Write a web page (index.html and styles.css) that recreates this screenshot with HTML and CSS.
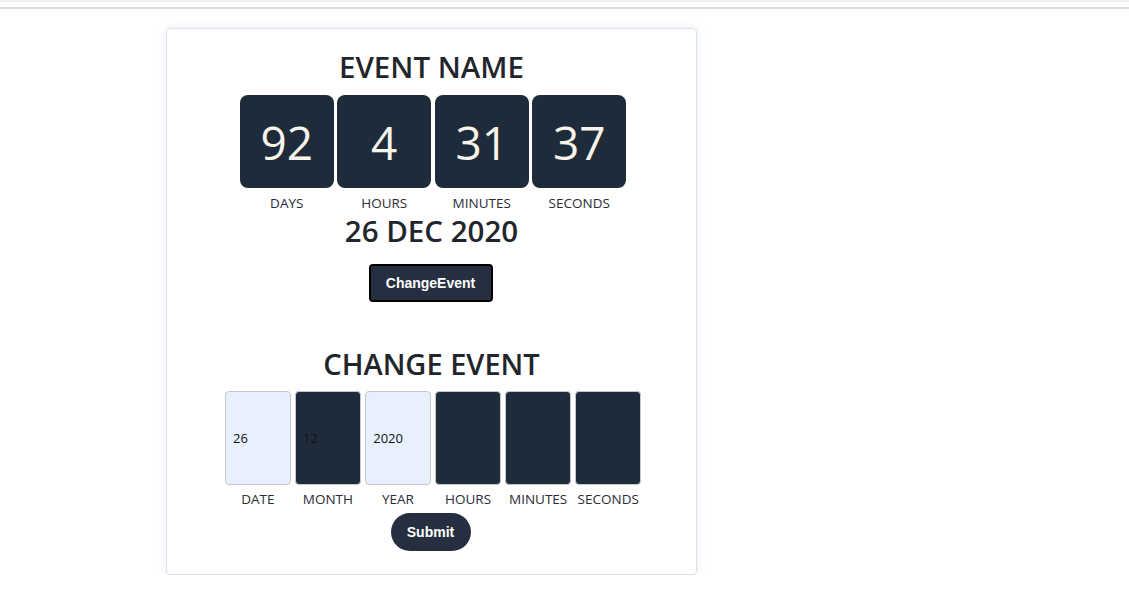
FILE: index.html
```html
<!DOCTYPE html>
<html>
<head>
<meta charset="utf-8">
<link rel="stylesheet" href="styles.css">
</head>
<body>
<div class="topbar"></div>
<main class="page">
  <section class="card">
    <h1 class="title">EVENT NAME</h1>
    <div class="countdown">
      <div class="unit"><div class="box">92</div><span class="label">DAYS</span></div>
      <div class="unit"><div class="box">4</div><span class="label">HOURS</span></div>
      <div class="unit"><div class="box">31</div><span class="label">MINUTES</span></div>
      <div class="unit"><div class="box">37</div><span class="label">SECONDS</span></div>
    </div>
    <h2 class="date">26 DEC 2020</h2>
    <button class="btn-change">ChangeEvent</button>

    <h1 class="title title-change">CHANGE EVENT</h1>
    <form class="form">
      <div class="fields">
        <label class="field"><input class="inp light" value="26"><span class="label">DATE</span></label>
        <label class="field"><input class="inp dark" value="12"><span class="label">MONTH</span></label>
        <label class="field"><input class="inp light" value="2020"><span class="label">YEAR</span></label>
        <label class="field"><input class="inp dark" value=""><span class="label">HOURS</span></label>
        <label class="field"><input class="inp dark" value=""><span class="label">MINUTES</span></label>
        <label class="field"><input class="inp dark" value=""><span class="label">SECONDS</span></label>
      </div>
      <button type="button" class="btn-submit">Submit</button>
    </form>
  </section>
</main>
</body>
</html>
```

FILE: styles.css
```css
* { box-sizing: border-box; }
html, body { margin: 0; padding: 0; background: #fff; }
body {
  font-family: "Open Sans", "Noto Sans", sans-serif;
  color: #212529;
}
.topbar {
  height: 9px;
  border-top: 2px solid #f0f0f0;
  border-bottom: 2px solid #dadadf;
}
.page {
  padding: 19px 0 0 166px;
}
.card {
  width: 531px;
  height: 547px;
  border: 1px solid #dee2e6;
  border-radius: 4px;
  box-shadow: 0 0 8px rgba(200, 212, 235, 0.45);
  display: flex;
  flex-direction: column;
  align-items: center;
  padding-top: 18px;
}
.title {
  margin: 0;
  font-size: 29.5px;
  font-weight: 600;
  line-height: 40px;
  color: #22262c;
}
.countdown {
  display: flex;
  gap: 3.5px;
  margin-top: 8px;
  margin-left: 3px;
}
.unit {
  display: flex;
  flex-direction: column;
  align-items: center;
}
.box {
  width: 94px;
  height: 93px;
  background: #1e2b3a;
  border-radius: 8px;
  color: #f8f4ea;
  font-size: 46px;
  font-weight: 400;
  display: flex;
  align-items: center;
  justify-content: center;
}
.label {
  font-size: 13.5px;
  line-height: 20px;
  margin-top: 5px;
  color: #2b2b35;
}
.date {
  margin: 0;
  font-size: 29.5px;
  font-weight: 600;
  line-height: 36px;
  color: #22262c;
}
.btn-change {
  margin-top: 15px;
  width: 124px;
  height: 38px;
  background: #262f40;
  color: #fff;
  border: 2px solid #000;
  border-radius: 4px;
  font-family: "Liberation Sans", Arial, sans-serif;
  font-weight: 700;
  font-size: 14px;
  margin-left: -2px;
}
.title-change {
  margin-top: 42px;
  font-size: 29px;
}
.form {
  display: flex;
  flex-direction: column;
  align-items: center;
}
.fields {
  display: flex;
  gap: 4.6px;
  margin-top: 7px;
  margin-left: 3px;
}
.field {
  display: flex;
  flex-direction: column;
  align-items: center;
}
.field .label { margin-top: 4px; }
.inp {
  width: 65.5px;
  height: 94px;
  border: 1px solid #c8c8cc;
  border-radius: 4px;
  padding: 0 0 0 7px;
  font-family: "Open Sans", "Noto Sans", sans-serif;
  font-size: 13px;
  color: #111;
}
.inp.light { background: #e8f0fe; }
.inp.dark { background: #1e2b3a; }
.btn-submit {
  margin-top: 4px;
  margin-left: -2px;
  width: 80px;
  height: 38px;
  background: #262f40;
  color: #fff;
  border: none;
  border-radius: 19px;
  font-family: "Liberation Sans", Arial, sans-serif;
  font-weight: 700;
  font-size: 14px;
}
```
